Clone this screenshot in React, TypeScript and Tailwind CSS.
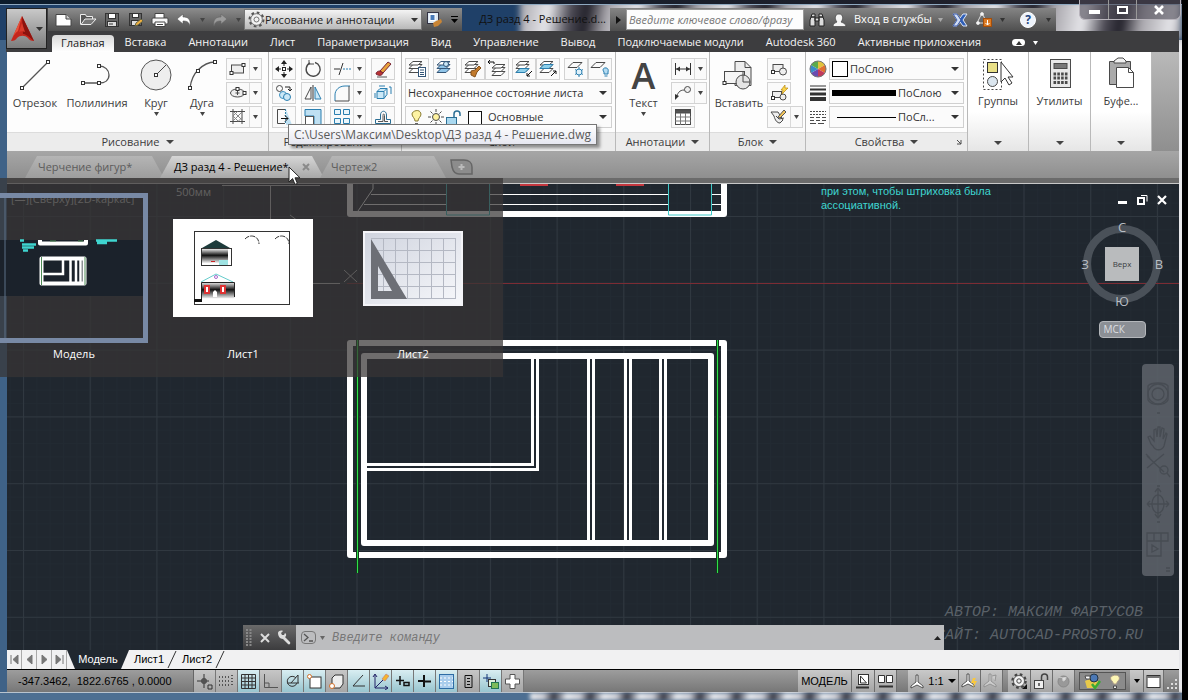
import React from 'react'
import clsx from 'clsx'

type IconProps = {
  w?: number
  h?: number
  stroke?: string
  className?: string
  children: React.ReactNode
}

const Icon = ({ w = 20, h = 20, stroke = '#4a4a4a', className, children }: IconProps) => (
  <svg
    width={w}
    height={h}
    viewBox={`0 0 ${w} ${h}`}
    fill="none"
    stroke={stroke}
    className={clsx('shrink-0', className)}
    aria-hidden="true"
  >
    {children}
  </svg>
)

const Caret = ({ className = 'text-[#333]', w = 7 }: { className?: string; w?: number }) => (
  <svg width={w} height={4} viewBox="0 0 8 4" preserveAspectRatio="none" className={clsx('shrink-0', className)} aria-hidden="true">
    <path d="M0 0h8L4 4z" fill="currentColor" />
  </svg>
)

// little square grip used at the ends of the drawing icons
const Node = ({ x, y }: { x: number; y: number }) => (
  <rect x={x - 1.5} y={y - 1.5} width={3} height={3} fill="#fff" stroke="#333" />
)

const Pointer = ({ className }: { className?: string }) => (
  <svg width={14} height={20} viewBox="0 0 14 20" className={className} aria-hidden="true">
    <path d="M1 1v15l3.6-3.4L7 18.4l2.4-1L7 11.8h5z" fill="#fff" stroke="#222" />
  </svg>
)

const quickIcons = [
  {
    label: 'Создать',
    art: (
      <Icon w={18} h={16} stroke="#444">
        <path d="M1 2.5h10l5 4.5v7H1z" fill="#fff" />
        <path d="M11 2.5V7h5" fill="#ccc" />
      </Icon>
    ),
  },
  {
    label: 'Открыть',
    art: (
      <Icon w={18} h={16} stroke="#eee">
        <path d="M1.5 12.5v-10h5l1 2h6v3" fill="#555" />
        <path d="M2 12.5 6 7h11l-5 5.5z" fill="#777" />
      </Icon>
    ),
  },
  {
    label: 'Сохранить',
    art: (
      <Icon w={16} h={16} stroke="#333">
        <rect x="1.5" y="1.5" width="13" height="13" fill="#666" />
        <rect x="4.5" y="1.5" width="7" height="5" fill="#fff" />
        <rect x="3.5" y="9.5" width="9" height="5" fill="#ddd" />
        <path d="M5 12h4" />
      </Icon>
    ),
  },
  {
    label: 'Сохранить как',
    art: (
      <Icon w={16} h={16} stroke="#333">
        <rect x="1.5" y="1.5" width="12" height="12" fill="#666" />
        <rect x="4.5" y="1.5" width="6" height="4" fill="#fff" />
        <rect x="3.5" y="8.5" width="8" height="5" fill="#ddd" />
        <path d="m7 14 1-3 5-4 2 2-5 4z" fill="#f0b040" stroke="#664" />
      </Icon>
    ),
  },
  {
    label: 'Печать',
    art: (
      <Icon w={18} h={16} stroke="#444">
        <path d="M4 6V1.500h9V6" fill="#fff" />
        <rect x="1" y="6" width="16" height="6" rx="1" fill="#f5f5f5" />
        <path d="M4 10h10v4.500H4z" fill="#fff" />
        <path d="M6 12.500h6" />
      </Icon>
    ),
  },
  {
    label: 'Отменить',
    art: (
      <Icon w={18} h={16}>
        <path d="M2 7 8 2v3c5 0 8 2 7 9-1-4-3-5-7-5v3z" fill="#fff" stroke="#555" strokeWidth=".6" />
      </Icon>
    ),
  },
]

const QuickAccess = () => (
  <div className="flex h-full shrink-0 items-center bg-gradient-to-b from-[#8d8d8d] to-[#4f4f4f] pl-1">
    {quickIcons.map((item) => (
      <button key={item.label} aria-label={item.label} className="flex w-6 justify-center">
        {item.art}
      </button>
    ))}
    <span className="flex w-3 justify-center">
      <Caret className="text-[#444]" w={5} />
    </span>
    <button aria-label="Повторить" className="flex w-6 justify-center">
      <Icon w={18} h={16}>
        <path d="m16 7-6-5v3C5 5 2 7 3 14c1-4 3-5 7-5v3z" fill="#9b9b9b" stroke="#666" strokeWidth=".6" />
      </Icon>
    </button>
    <span className="flex w-3 justify-center">
      <Caret className="text-[#444]" w={5} />
    </span>
    <div className="relative flex h-[21px] w-[178px] shrink-0 items-center border border-[#777] bg-gradient-to-b from-[#f4f4f4] to-[#b9b9b9] pl-[3px]">
      <Icon w={17} h={17} stroke="#555">
        <circle cx="8.500" cy="8.500" r="7" strokeWidth="2" strokeDasharray="2.700 2.800" />
        <circle cx="8.500" cy="8.500" r="5.800" fill="#f2f2f2" strokeWidth=".8" />
        <circle cx="8.500" cy="8.500" r="2.500" strokeWidth=".8" />
      </Icon>
      <select aria-label="Рабочее пространство" className="w-full appearance-none bg-transparent text-[11px] leading-4 text-[#1d1d1d] outline-none">
        <option>Рисование и аннотации</option>
      </select>
      <Caret className="pointer-events-none absolute right-[3px] text-[#333]" />
    </div>
    <button aria-label="Поиск объектов" className="flex w-6 justify-center">
      <Icon w={17} h={17} stroke="#334">
        <rect x="1.500" y="1.500" width="11" height="11" fill="#dce8f4" />
        <rect x="4" y="3.500" width="5" height="6" fill="#4679b8" stroke="#fff" />
        <path d="m7 12 3-2 5-2 1 3-4 4-4 1z" fill="#c98535" stroke="none" />
      </Icon>
    </button>
    <button aria-label="Настроить" className="flex w-4 flex-col items-center gap-[2px]">
      <span className="h-px w-[7px] bg-black" />
      <Caret className="text-black" />
    </button>
  </div>
)

const InfoCenter = () => (
  <div className="flex h-full shrink-0 items-center bg-gradient-to-b from-[#858585] to-[#4f4f4f] text-white">
    <button aria-label="Развернуть" className="flex w-4 justify-center">
      <Icon w={6} h={8}>
        <path d="m1 0 5 4-5 4z" fill="#111" stroke="none" />
      </Icon>
    </button>
    <input
      aria-label="Поиск"
      placeholder="Введите ключевое слово/фразу"
      className="h-[21px] w-[178px] border border-[#999] bg-[#fdfdfd] px-[2px] text-[11px] italic text-[#666] outline-none placeholder:text-[#777]"
    />
    <button aria-label="Найти" className="flex w-[26px] justify-center">
      <Icon w={16} h={16} stroke="#222">
        <path d="M2 5h4v9H1V8zM10 5h4l1 3v6h-5zM3 2h3v3H2zM10 2h3l1 3h-4zM6 6h4v3H6z" fill="#ddd" />
      </Icon>
    </button>
    <button className="flex items-center gap-[6px]">
      <Icon w={18} h={16} stroke="#444">
        <path d="M3 14.500c0-3 3-4 4-4.500-2-2-3-8 2-8s4 6 2 8c1 .5 5 1.500 5 4.500z" fill="#f5f5f5" strokeWidth=".7" />
      </Icon>
      <span className="whitespace-nowrap text-[11px]">Вход в службы</span>
    </button>
    <span className="flex w-4 justify-center">
      <Caret className="text-[#aaa]" w={5} />
    </span>
    <button aria-label="Exchange" className="flex w-6 justify-center">
      <Icon w={16} h={16}>
        <path d="M1 2h4l3 4 3-4h4l-4 6 4 6h-4l-3-4-3 4H1l4-6z" fill="#2f5fb8" stroke="#dfe8f8" />
        <path d="M1 2h4l4 6-4 6H1l4-6z" fill="#cfdcf3" stroke="#3957a5" />
      </Icon>
    </button>
    <button aria-label="Автономная справка" className="flex w-6 justify-center">
      <Icon w={18} h={17} stroke="#ddd">
        <path d="M7 2 2 12h10M7 2l4 8" />
        <circle cx="7" cy="3" r="1.500" fill="#fff" />
        <circle cx="3" cy="12" r="1.500" fill="#fff" />
        <rect x="8.500" y="7.500" width="8" height="8" fill="#dc7a22" stroke="#a34e0c" />
        <path d="M12.500 9v5m-2-2 2 2 2-2" stroke="#fff" />
      </Icon>
    </button>
    <span className="flex w-3 justify-center">
      <Caret className="text-[#333]" w={5} />
    </span>
    <button aria-label="Справка" className="ml-2 flex w-6 justify-center">
      <span className="flex size-4 items-center justify-center rounded-full border border-white bg-[#eef3fb] text-[12px] font-bold text-[#24457f]">?</span>
    </button>
    <span className="flex w-4 justify-center">
      <Caret className="text-[#333]" w={5} />
    </span>
  </div>
)

const WindowButtons = () => (
  <div className="absolute right-[1px] top-0 flex h-5 overflow-hidden rounded-b-md border border-t-0 border-[#b8b4bc] bg-[#4c4a55]/60">
    <button aria-label="Свернуть" className="flex w-[29px] items-center justify-center border-r border-[#999]">
      <span className="mt-1 h-[4px] w-[11px] bg-white" />
    </button>
    <button aria-label="Развернуть окно" className="flex w-[28px] items-center justify-center border-r border-[#999]">
      <span className="h-[8px] w-[11px] border-2 border-white" />
    </button>
    <button aria-label="Закрыть окно" className="flex w-[43px] items-center justify-center">
      <Icon w={12} h={10}>
        <path d="m2 1 8 8m0-8L2 9" stroke="#fff" strokeWidth="2.600" />
      </Icon>
    </button>
  </div>
)

const ribbonTabs = [
  'Вставка',
  'Аннотации',
  'Лист',
  'Параметризация',
  'Вид',
  'Управление',
  'Вывод',
  'Подключаемые модули',
  'Autodesk 360',
  'Активные приложения',
]

const RibbonTabs = () => (
  <nav className="flex h-[21px] items-end whitespace-nowrap bg-[#3d3d3f] pl-1 text-[11px] text-[#f4f4f4]">
    <a href="#home" className="flex h-[17px] items-center rounded-t-sm bg-gradient-to-b from-[#d9d9d9] to-white px-[9px] text-[#222]">
      Главная
    </a>
    {ribbonTabs.map((tab) => (
      <a key={tab} href="#tab" className="flex h-[19px] items-center px-[11px]">
        {tab}
      </a>
    ))}
    <button aria-label="Свернуть ленту" className="ml-5 flex h-[19px] items-center gap-2">
      <span className="flex h-[7px] w-[13px] items-center justify-center rounded-sm bg-white">
        <Caret className="rotate-180 text-[#333]" w={6} />
      </span>
      <Caret className="text-white" w={5} />
    </button>
  </nav>
)

type PanelProps = {
  title: string
  className: string
  launcher?: boolean
  children: React.ReactNode
}

const Panel = ({ title, className, launcher, children }: PanelProps) => (
  <section className={clsx('flex shrink-0 flex-col border-r border-[#b9b9b9] bg-[#fdfdfd]', className)}>
    <div className="flex flex-1 px-[3px] pt-[6px]">{children}</div>
    <button className="relative flex h-[19px] items-center justify-center gap-[6px] border-t border-[#dcdcdc] bg-[#ececec] text-[11px] text-[#3c3c3c]">
      {title}
      <Caret className="text-[#444]" w={8} />
      {launcher && (
        <Icon w={6} h={6} className="absolute right-[5px]">
          <path d="m1 1 4 4M5 1v4H1" />
        </Icon>
      )}
    </button>
  </section>
)

const BigButton = ({ label, caret, className, children }: { label: string; caret?: boolean; className: string; children: React.ReactNode }) => (
  <button className={clsx('flex shrink-0 flex-col items-center', className)}>
    {children}
    <span className="whitespace-nowrap text-[11px] leading-[18px] text-[#3c3c3c]">{label}</span>
    {caret && <Caret className="text-[#444]" w={5} />}
  </button>
)

const Tool = ({ label, split, className, children }: { label: string; split?: boolean; className?: string; children: React.ReactNode }) => (
  <span className={clsx('flex h-[22px] border border-[#d3d3d3] bg-[#fafafa]', className)}>
    <button aria-label={label} className="flex w-[22px] items-center justify-center">
      {children}
    </button>
    {split && (
      <button aria-label={`${label}: варианты`} className="flex w-3 items-center justify-center border-l border-[#d9d9d9]">
        <Caret className="text-[#444]" w={5} />
      </button>
    )}
  </span>
)

const Column = ({ children, className }: { children: React.ReactNode; className?: string }) => (
  <div className={clsx('flex shrink-0 flex-col items-start gap-[2px]', className)}>{children}</div>
)

const DrawPanel = () => (
  <Panel title="Рисование" className="w-[262px]">
    <BigButton label="Отрезок" className="w-[50px]">
      <Icon w={36} h={36}>
        <path d="M5 30 31 4" stroke="#555" strokeWidth="1.300" />
        <Node x={5} y={30} />
        <Node x={31} y={4} />
      </Icon>
    </BigButton>
    <BigButton label="Полилиния" className="w-[74px]">
      <Icon w={36} h={36}>
        <path d="M4 25h16c6 0 10-3 10-8s-4-9-10-9" stroke="#555" strokeWidth="1.300" />
        <Node x={4} y={25} />
        <Node x={20} y={25} />
        <Node x={20} y={8} />
      </Icon>
    </BigButton>
    <BigButton label="Круг" caret className="w-11">
      <Icon w={36} h={36}>
        <circle cx="18" cy="17" r="15" stroke="#555" fill="#eee" />
        <path d="m18 17 10-10" />
        <Node x={18} y={17} />
      </Icon>
    </BigButton>
    <BigButton label="Дуга" caret className="w-12">
      <Icon w={36} h={36}>
        <path d="M6 30C7 22 9 17 14 12s11-8 17-8" stroke="#555" strokeWidth="1.300" />
        <Node x={6} y={30} />
        <Node x={14} y={13} />
        <Node x={31} y={4} />
      </Icon>
    </BigButton>
    <Column>
      <Tool label="Прямоугольник" split>
        <Icon w={20} h={16}>
          <rect x="3.500" y="4" width="12" height="8" fill="#eee" />
          <Node x={3.5} y={12} />
          <Node x={15.5} y={4} />
        </Icon>
      </Tool>
      <Tool label="Эллипс" split>
        <Icon w={20} h={16}>
          <ellipse cx="9.500" cy="8" rx="7" ry="4" fill="#eee" />
          <path d="M9.500 6v4m-2-2h4" />
          <Node x={9.5} y={4} />
          <Node x={16.5} y={8} />
        </Icon>
      </Tool>
      <Tool label="Штриховка" split>
        <Icon w={20} h={18}>
          <path d="M5 1v15M14 1v15M2 3.500h15M2 13.500h15" />
          <path d="m5 8 4.500-4.500M5 13l9-9M10 13.500l4-4M6 4l8 8M5 8l5 5" stroke="#888" />
        </Icon>
      </Tool>
    </Column>
  </Panel>
)

const ModifyPanel = () => (
  <Panel title="Редактирование" className="w-[133px]">
    <Column className="w-[29px]">
      <Tool label="Перенести">
        <Icon w={18} h={18} stroke="#222">
          <path d="M9 1v5m0 6v5M1 9h5m6 0h5" />
          <path d="M9 0l3 4H6zM9 18l3-4H6zM0 9l4 3V6zM18 9l-4 3V6z" fill="#222" stroke="none" />
          <rect x="7.500" y="7.500" width="3" height="3" />
        </Icon>
      </Tool>
      <Tool label="Копировать">
        <Icon w={18} h={18}>
          <circle cx="4.500" cy="4.500" r="3" />
          <circle cx="8" cy="11" r="3.500" fill="#cbe8f7" stroke="#3b8fc0" />
          <circle cx="12" cy="13" r="3.500" fill="#cbe8f7" stroke="#2b7fb0" />
          <path d="M10 3h5v3m-2-1 2 2 2-2" stroke="#222" />
        </Icon>
      </Tool>
      <Tool label="Растянуть">
        <Icon w={18} h={18}>
          <path d="M11 1 17 17H11z" fill="#bfe0f2" stroke="none" />
          <path d="M10 1.500H2.500v14H10" />
          <path d="M10.500 1v15" strokeDasharray="2 1" stroke="#3a87ad" />
          <path d="M6 10.500h7m-3-3 3 3-3 3" stroke="#111" />
        </Icon>
      </Tool>
    </Column>
    <Column className="w-[29px]">
      <Tool label="Повернуть">
        <Icon w={18} h={18}>
          <path d="M11 2.500a7 7 0 1 1-5 .5" strokeWidth="1.400" />
          <path d="M5 0v4h5" />
        </Icon>
      </Tool>
      <Tool label="Зеркало">
        <Icon w={18} h={18}>
          <path d="M7 3v12H1z" />
          <path d="M11 3v12h6z" fill="#cbe8f7" stroke="#2b7fb0" />
          <path d="M9 1v16" stroke="#333" />
        </Icon>
      </Tool>
      <Tool label="Масштаб">
        <Icon w={18} h={18} stroke="#2b7fb0">
          <path d="M1 1.500h16v15H10V8H1z" fill="#bfe0f2" />
          <rect x="1.500" y="8.500" width="8" height="8" fill="#fff" stroke="#555" />
        </Icon>
      </Tool>
    </Column>
    <Column className="w-[41px]">
      <Tool label="Обрезать" split>
        <Icon w={18} h={16}>
          <path d="M1 8h6M6 14 10 2" stroke="#333" />
          <path d="M10 8h8" stroke="#2b7fb0" strokeDasharray="2 1" />
        </Icon>
      </Tool>
      <Tool label="Сопряжение" split>
        <Icon w={18} h={18}>
          <path d="M2 17V11c0-5 4-9 10-9h5" stroke="#2b7fb0" />
          <path d="M2 17h14V2" />
        </Icon>
      </Tool>
      <Tool label="Массив" split>
        <Icon w={18} h={18} stroke="#2b7fb0">
          <path d="M1.500 1.500h6v5h-6zM10.500 1.500h6v5h-6zM1.500 10.500h6v5h-6zM10.500 10.500h6v5h-6z" fill="#eaf6fc" />
        </Icon>
      </Tool>
    </Column>
    <Column>
      <Tool label="Стереть">
        <Icon w={18} h={18} stroke="#723">
          <path d="m6 11 8-9 3 2-8 9z" fill="#e8a33c" />
          <path d="M2 14c0-2 2-3 4-3l3 2c-1 3-4 3-7 1z" fill="#b33" />
          <path d="M3 17h10" stroke="#555" />
        </Icon>
      </Tool>
      <Tool label="Расчленить">
        <Icon w={18} h={18} stroke="#2b7fb0">
          <path d="M3 7.500h7v7H3zM3 7.500l3-3h7l-3 3M13 4.500v6l-3 4" fill="#cbe8f7" />
          <path d="M1 9v5M15 3h2v7M5 2h6" />
        </Icon>
      </Tool>
      <Tool label="Подобие">
        <Icon w={18} h={18} stroke="#2b6f95">
          <path d="M1.500 15.500v-4h5V7c0-5 6-5 6 0v4.500h4v4z" />
          <path d="M4 13.500h5V7.500c0-2 1.500-2 1.500 0v6H14" stroke="#555" />
        </Icon>
      </Tool>
    </Column>
  </Panel>
)

// stacked sheets, shared by all layer tools
const Sheets = ({ tint = '#fff' }: { tint?: string }) => (
  <g>
    <path d="m2 12.500 4-4h9l-4 4z" fill={tint} />
    <path d="m2 8.500 4-4h9l-4 4z" fill={tint} />
    <path d="m2 5 4-3.500h9L11 5z" fill="#fff" />
  </g>
)

const SelectBox = ({ label, value, before, className }: { label: string; value: string; before?: React.ReactNode; className?: string }) => (
  <div className={clsx('relative flex h-[22px] min-w-0 items-center border border-[#d0d0d0] bg-[#fbfbfb] pl-[2px] pr-4', className)}>
    {before}
    <select aria-label={label} className="w-0 min-w-0 flex-1 appearance-none bg-transparent text-[11px] leading-5 text-[#333] outline-none">
      <option>{value}</option>
    </select>
    <Caret className="pointer-events-none absolute right-1 text-[#333]" w={8} />
  </div>
)

const LayersPanel = () => (
  <Panel title="Слои" className="w-[214px]">
    <div className="flex min-w-0 flex-1 flex-col gap-[2px]">
      <div className="flex justify-between">
        <Tool label="Свойства слоя">
          <Icon w={20} h={18}>
            <Sheets />
            <rect x="11.500" y="7.500" width="7" height="9" fill="#fff" stroke="#357" />
            <path d="M13 10h4M13 12.500h4M13 14.500h4" stroke="#357" />
          </Icon>
        </Tool>
        <Tool label="Переход слоев">
          <Icon w={20} h={18} stroke="#357">
            <Sheets tint="#8fc4e8" />
            <circle cx="11" cy="4" r="2.500" fill="#cbe8f7" />
          </Icon>
        </Tool>
        <span className="flex">
          <Tool label="Копировать свойства слоя">
            <Icon w={20} h={18}>
              <Sheets />
              <path d="m8 11 4-1 4-4 2 2-4 4-2 5-4-2z" fill="#c27a2c" stroke="#84521c" />
            </Icon>
          </Tool>
          <Tool label="Предыдущий слой">
            <Icon w={20} h={18}>
              <g transform="translate(3 3)">
                <Sheets />
              </g>
              <path d="M7 4V2H1m2-2L1 2l2 2" stroke="#111" />
            </Icon>
          </Tool>
        </span>
        <span className="flex">
          <Tool label="Изолировать слой">
            <Icon w={20} h={18}>
              <Sheets />
              <path d="m2 12.500 4-4h9l-4 4z" fill="#8fd0ea" stroke="#2b7fb0" />
              <path d="m18 11-5 5m0-3v3h3" stroke="#111" />
            </Icon>
          </Tool>
          <Tool label="Отключить изоляцию">
            <Icon w={20} h={18}>
              <Sheets />
              <path d="m2 8.500 4-4h9l-4 4z" fill="#8fd0ea" stroke="#2b7fb0" />
              <path d="m13 16 5-5m-3 0h3v3" stroke="#111" />
            </Icon>
          </Tool>
        </span>
        <span className="flex">
          <Tool label="Заморозить слой">
            <Icon w={20} h={18}>
              <path d="m2 7.500 5-5h9l-5 5z" />
              <path d="M13 7v10M9 9.500l8 5M17 9.500l-8 5" stroke="#2b7fb0" />
              <circle cx="13" cy="12" r="3" stroke="#2b7fb0" fill="#dff1fa" />
            </Icon>
          </Tool>
          <Tool label="Отключить слой">
            <Icon w={20} h={18}>
              <path d="m1 7.500 5-5h9l-5 5z" />
              <path d="M14 14v-2c-4-5 6-6 4 0v2z" fill="#b5dcf2" stroke="#2b7fb0" />
              <path d="M14.500 16h3" stroke="#2b7fb0" />
            </Icon>
          </Tool>
        </span>
      </div>
      <SelectBox label="Состояние слоев" value="Несохраненное состояние листа" />
      <SelectBox
        label="Слой"
        value="Основные"
        before={
          <Icon w={76} h={18} className="mr-1">
            <path d="M7 13c0-3-3-4-3-7s8-6 9 0c0 3-3 4-3 7z" fill="#fdf3a4" stroke="#887a30" />
            <path d="M7 15.500h3" stroke="#666" />
            <circle cx="28" cy="9" r="3.500" fill="#fff3a0" />
            <path d="M28 1v3m0 10v3M20 9h3m10 0h3M22.500 3.500l2 2m7 7 2 2m0-11-2 2m-7 7-2 2" />
            <rect x="38.500" y="9.500" width="10" height="7" fill="#a9d8f0" stroke="#2b6f95" />
            <path d="M46 9V6c0-4 6-4 6 0v2" stroke="#2b6f95" strokeWidth="1.500" />
            <rect x="60.500" y="3.500" width="13" height="13" fill="#fff" stroke="#111" />
          </Icon>
        }
      />
    </div>
  </Panel>
)

const AnnotationPanel = () => (
  <Panel title="Аннотации" className="w-[94px]">
    <BigButton label="Текст" caret className="w-[49px]">
      <span className="flex h-9 items-center text-[36px] font-semibold leading-8 text-[#444]">A</span>
    </BigButton>
    <Column className="ml-[3px]">
      <Tool label="Размер" split>
        <Icon w={20} h={16}>
          <path d="M2.500 2v12M17.500 2v12M3 8h14" stroke="#333" />
          <path d="m3 8 4-2.500v5zM17 8l-4-2.500v5z" fill="#333" stroke="none" />
        </Icon>
      </Tool>
      <Tool label="Выноска" split>
        <Icon w={20} h={16}>
          <circle cx="14.500" cy="4.500" r="3" fill="#eee" />
          <path d="M11.500 5C6 5 5 8 3 13" />
          <path d="m2 15 0-6 4 2z" fill="#333" stroke="none" />
        </Icon>
      </Tool>
      <Tool label="Таблица">
        <Icon w={18} h={18}>
          <rect x="1.500" y="1.500" width="15" height="15" fill="#fff" />
          <path d="M1.500 2h15v3h-15z" fill="#555" />
          <path d="M1 9h16M1 13h16M6.500 5v12M11.500 5v12" stroke="#777" />
        </Icon>
      </Tool>
    </Column>
  </Panel>
)

const BlockPanel = () => (
  <Panel title="Блок" className="w-24">
    <BigButton label="Вставить" className="w-[52px]">
      <Icon w={36} h={36}>
        <path d="M14 3.500h10l6 6v18H14z" fill="#eee" />
        <path d="M24 3.500v6h6" />
        <rect x="3.500" y="13.500" width="20" height="12" fill="#f5f5f5" />
        <circle cx="22" cy="24" r="7" fill="#e4e4e4" />
        <path d="M22 13v11h7" />
        <Node x={3.5} y={25} />
      </Icon>
    </BigButton>
    <Column className="ml-[2px]">
      <Tool label="Создать блок">
        <Icon w={18} h={16}>
          <rect x="3" y="3.500" width="10" height="7" fill="#eee" />
          <circle cx="13" cy="10.500" r="3.500" fill="#eee" />
          <Node x={3} y={11} />
        </Icon>
      </Tool>
      <Tool label="Редактировать блок">
        <Icon w={18} h={18}>
          <rect x="2.500" y="7.500" width="9" height="6" fill="#eee" />
          <circle cx="13" cy="13" r="3" fill="#eee" />
          <path d="m11 6 4-5v3h3l-6 6 1-4z" fill="#fbd54a" stroke="#b98a10" strokeWidth=".7" />
          <Node x={3} y={14} />
        </Icon>
      </Tool>
      <Tool label="Атрибуты" split>
        <Icon w={20} h={18}>
          <path d="M2 4h7l5 8-3 3c-3 0-5-3-6-7z" fill="#eee" />
          <path d="m9 9 6-7 2 2-6 6z" fill="#f5c65a" stroke="#555" />
          <path d="m7 8 3 3 5-1" />
        </Icon>
      </Tool>
    </Column>
  </Panel>
)

const PropertiesPanel = () => (
  <Panel title="Свойства" launcher className="w-[162px]">
    <div className="flex min-w-0 flex-1 flex-col gap-[2px]">
      <div className="flex items-center gap-[2px]">
        <Icon w={18} h={18}>
          <g stroke="none">
            <path d="M9 9V1a8 8 0 0 1 7 4z" fill="#e2c33b" />
            <path d="m9 9 7-4a8 8 0 0 1 0 8z" fill="#e07030" />
            <path d="m9 9 7 4a8 8 0 0 1-7 4z" fill="#c23a5c" />
            <path d="M9 9v8a8 8 0 0 1-7-4z" fill="#6a4bb0" />
            <path d="m9 9-7 4a8 8 0 0 1 0-8z" fill="#3a8bc8" />
            <path d="M9 9 2 5a8 8 0 0 1 7-4z" fill="#5bab4c" />
          </g>
          <circle cx="9" cy="9" r="8" stroke="#777" />
        </Icon>
        <SelectBox
          label="Цвет"
          value="ПоСлою"
          className="flex-1"
          before={<span className="mr-[2px] size-4 shrink-0 border border-black bg-white" />}
        />
      </div>
      <div className="flex items-center gap-[2px]">
        <Icon w={18} h={18} stroke="#333">
          <path d="M1 2h16" />
          <path d="M1 5.500h16" strokeWidth="2" />
          <path d="M1 10h16" strokeWidth="3" />
          <path d="M1 15h16" strokeWidth="4" />
        </Icon>
        <SelectBox
          label="Вес линий"
          value="ПоСлою"
          className="flex-1"
          before={<span className="mr-[2px] h-[6px] w-16 shrink-0 bg-black" />}
        />
      </div>
      <div className="flex items-center gap-[2px]">
        <Icon w={18} h={18}>
          <path d="M1 3.500h16M1 6.500h16" strokeDasharray="2 1" />
          <path d="M1 9.500h16M1 12.500h16" strokeDasharray="4 2" />
          <path d="M1 15.500h16" strokeDasharray="6 2" />
        </Icon>
        <SelectBox
          label="Тип линий"
          value="ПоСл..."
          className="flex-1"
          before={<span className="ml-[5px] mr-[2px] h-px w-[59px] shrink-0 bg-black" />}
        />
      </div>
    </div>
  </Panel>
)

const CollapsedPanel = ({ label, className, children }: { label: string; className: string; children: React.ReactNode }) => (
  <button
    className={clsx(
      'flex shrink-0 flex-col items-center border-r border-[#b9b9b9] bg-gradient-to-b from-white from-60% to-[#e6e6e6] pb-[6px] pt-1 text-[11px] text-[#3c3c3c]',
      className,
    )}
  >
    {children}
    <span className="leading-[18px]">{label}</span>
    <Caret className="mt-auto text-[#444]" w={8} />
  </button>
)

const Ribbon = () => (
  <div className="flex h-[99px] shrink-0 bg-gradient-to-b from-[#b9b9b9] to-[#8f8f8f]">
    <DrawPanel />
    <ModifyPanel />
    <LayersPanel />
    <AnnotationPanel />
    <BlockPanel />
    <PropertiesPanel />
    <CollapsedPanel label="Группы" className="w-[61px]">
      <Icon w={36} h={36}>
        <rect x="3.500" y="3.500" width="18" height="30" strokeDasharray="2 2" stroke="#444" />
        <rect x="7.500" y="6.500" width="10" height="10" fill="#e9e087" stroke="#333" />
        <circle cx="12.500" cy="25.500" r="5" fill="#dbe6ef" />
        <path d="M21 6v20l4-4 4 7 3-2-4-6h5z" fill="#fff" stroke="#333" />
      </Icon>
    </CollapsedPanel>
    <CollapsedPanel label="Утилиты" className="w-[62px]">
      <Icon w={36} h={36}>
        <rect x="8.500" y="3.500" width="20" height="28" fill="#e8e8e8" />
        <rect x="12" y="7.500" width="13" height="5" fill="#777" />
        <path d="M11.500 18h14M11.500 22h14M11.500 26.500h14" strokeWidth="3" strokeDasharray="2.600 1.200" />
      </Icon>
    </CollapsedPanel>
    <CollapsedPanel label="Буфе..." className="w-[61px]">
      <Icon w={36} h={36}>
        <path d="M6.500 5.500h21v23h-21z" fill="#aaa" />
        <path d="M11 7V5l4-3h5l3 3v2z" fill="#f0f0f0" />
        <path d="M13.500 11.500h12l5 5v15h-17z" fill="#fff" />
        <path d="M25.500 11.500v5h5" />
      </Icon>
    </CollapsedPanel>
  </div>
)

const tabShape = '[clip-path:polygon(12px_0,calc(100%-12px)_0,100%_100%,0_100%)]'

const FileTabs = () => (
  <div className="flex h-[33px] shrink-0 flex-col bg-gradient-to-b from-[#a6a6a6] to-[#8a8a8a]">
    <div className="flex h-[27px] items-end pl-[18px] text-[11px] text-[#5c5c5c]">
      <a href="#f1" className={clsx('flex h-[22px] w-[139px] items-center bg-gradient-to-b from-[#b5b5b5] to-[#9d9d9d] pl-[13px]', tabShape)}>
        Черчение фигур*
      </a>
      <a
        href="#f2"
        className={clsx('-ml-1 flex h-[22px] w-[164px] items-center justify-between bg-gradient-to-b from-[#d6d6d6] to-[#a8a8a8] px-[14px] text-black', tabShape)}
      >
        <span className="whitespace-nowrap">ДЗ разд 4 - Решение*</span>
        <Icon w={8} h={8}>
          <path d="m1 1 6 6m0-6L1 7" stroke="#8a8a8a" strokeWidth="2" />
        </Icon>
      </a>
      <a href="#f3" className={clsx('-ml-1 flex h-[22px] w-[126px] items-center bg-gradient-to-b from-[#b5b5b5] to-[#9d9d9d] pl-[11px]', tabShape)}>
        Чертеж2
      </a>
      <button aria-label="Новый чертеж" className="mb-[3px] ml-1">
        <Icon w={24} h={16} stroke="#666">
          <path d="M1 1h13c5 0 8 3 8 7v7H9c-4 0-6-3-7-7z" fill="#8c8c8c" strokeWidth="1.500" />
          <path d="M11.500 5v6m-3-3h6" stroke="#bbb" strokeWidth="2" />
        </Icon>
      </button>
    </div>
    <div className="h-[5px] bg-[#6b6b6b]" />
    <div className="h-px bg-[#c8c8c8]" />
  </div>
)

// shapes use window coordinates, the group shifts them to the canvas origin
const Drawing = () => (
  <svg width="100%" height="100%" className="absolute inset-0" aria-hidden="true">
    <defs>
      <pattern id="minor" width="13.34" height="13.36" patternUnits="userSpaceOnUse" patternTransform="translate(16 32)">
        <path d="M.5 0v14M0 .5h14" stroke="#222a32" fill="none" />
      </pattern>
      <pattern id="major" width="66.7" height="66.8" patternUnits="userSpaceOnUse" patternTransform="translate(16 32)">
        <path d="M.5 0v67M0 .5h67" stroke="#303840" fill="none" />
      </pattern>
    </defs>
    <rect width="100%" height="100%" fill="#20272f" />
    <rect width="100%" height="100%" fill="url(#minor)" />
    <rect width="100%" height="100%" fill="url(#major)" />
    <path d="M340 99.500h900" stroke="#7c2c34" />
    <g transform="translate(-7 -184)" fill="none" stroke="#fff">
      <path d="M350 180v34h374v-34" strokeWidth="6" strokeLinejoin="round" />
      <path d="M371 194.500h75M489 194.500h179M712 194.500h10M364 204.500h82M489 204.500h179M712 204.500h10M358 211l15-22v-8" />
      <path d="M446.500 180v35h43v-35M668.500 180v35h43v-35" stroke="#3fc9c9" />
      <path d="M520 185h28M616 185h28" stroke="#c4373f" strokeWidth="2" />
      <path d="M222 185.500h98M270.500 185v35M313 283.500h27M344 270l13 12M357 270l-13 12M290 215l8 6" stroke="#c4c4c4" />

      <rect x="350" y="343" width="374" height="212" strokeWidth="6" strokeLinejoin="round" />
      <rect x="364" y="356" width="347" height="187" strokeWidth="6" strokeLinejoin="round" />
      <g strokeWidth="3">
        <path d="M532.500 358v106.500H366M537.500 358v111.500H366" />
        <path d="M588.500 358v184M593.500 358v184M625.500 358v184M630.500 358v184M660.500 358v184M665.500 358v184" />
      </g>
      <path d="M357.500 340v233M717.500 340v233" stroke="#123a1c" strokeWidth="3" />
      <path d="M357.500 340v233M717.500 340v233" stroke="#2fe04a" />
    </g>
  </svg>
)

const ViewCube = () => (
  <div className="absolute right-[16px] top-[34px] w-[82px] text-[#b9bec4]">
    <svg width={82} height={92} viewBox="0 0 82 92" aria-hidden="true">
      <circle cx="41" cy="46" r="35" fill="none" stroke="#4a5159" strokeWidth="8" />
      <rect x="24" y="29" width="34" height="34" fill="#b9bbbd" />
      <g fill="#b9bec4" fontSize="13" textAnchor="middle">
        <text x="41" y="14">С</text>
        <text x="41" y="88">Ю</text>
        <text x="4" y="51">З</text>
        <text x="78" y="51">В</text>
        <text x="41" y="49" fontSize="8" fill="#3a3d42">
          Верх
        </text>
      </g>
    </svg>
    <button className="mx-auto mt-[11px] flex h-[17px] w-[47px] items-center rounded border border-[#b4b7bb] bg-[#8b8f95] pl-1 text-[10px] text-[#dcdee0]">МСК</button>
  </div>
)

const NavBar = () => (
  <div className="absolute right-[5px] top-[180px] rounded bg-[#5b6068]/90">
    <svg width={32} height={212} viewBox="0 0 32 212" fill="none" stroke="#474c53" strokeWidth="1.300" aria-hidden="true">
      <path d="M6 22c3-4 17-4 20 0v14c-3 6-17 6-20 0z" />
      <circle cx="16" cy="30" r="6" />
      <circle cx="16" cy="30" r="10" />
      <path d="M15 49h3M15 122h3M15 158h3" />
      <path d="M9 80 6 73l2-1 4 5V66l2-1 1 8 1-10h2v10l2-9 2 1-1 10 3-6 1 1-3 12c-2 5-9 5-11 0z" />
      <path d="m5 92 17 16M22 90 5 104M4 90l4 4" />
      <circle cx="22" cy="106" r="4" />
      <path d="m25 109 3 4M16 124v30M16 124l-3 4m3-4 3 4M16 154l-3-4m3 4 3-4M5 140h22M5 140l3-3m-3 3 3 3M27 140l-3-3m3 3-3 3" />
      <ellipse cx="16" cy="140" rx="6" ry="9" />
      <path d="M5 169h21v8H5zM5 177v15h14v-15M12 169v8M19 169v8M10 181v7l6-3z" />
      <path d="M24 204h4m-4 3h4" />
    </svg>
  </div>
)

const CommandLine = () => (
  <div className="absolute bottom-0 left-[236px] right-[235px] flex h-[25px] items-center bg-[#bcbdbf]">
    <div className="flex h-full w-[53px] items-center justify-between bg-gradient-to-b from-[#6a6a6a] to-[#3c3c3e] pl-[3px] pr-[5px]">
      <svg width={6} height={18} viewBox="0 0 6 18" stroke="#888" strokeDasharray="2 1" aria-hidden="true">
        <path d="M1 0v18M4.500 0v18" strokeWidth="2" />
      </svg>
      <button aria-label="Закрыть">
        <Icon w={10} h={10} stroke="#ddd">
          <path d="m1 1 8 8m0-8L1 9" strokeWidth="2" />
        </Icon>
      </button>
      <button aria-label="Адаптация">
        <Icon w={14} h={15}>
          <path d="M1 3c0-2 3-3 5-2L4 3l1 2 2 0 1-2c2 1 1 4 0 4l5 5c1 2-1 3-2 2L6 9C3 9 1 6 1 3z" fill="#ddd" stroke="none" />
        </Icon>
      </button>
    </div>
    <span className="ml-[5px] flex h-[13px] w-[15px] items-center justify-center rounded-sm border border-[#777]">
      <Icon w={11} h={9} stroke="#555">
        <path d="m1 1 4 3.500L1 8M6 8h4" strokeWidth="1.300" />
      </Icon>
    </span>
    <Caret className="ml-1 text-[#666]" w={5} />
    <input
      aria-label="Командная строка"
      placeholder="Введите команду"
      className="ml-[7px] min-w-0 flex-1 bg-transparent font-['Liberation_Mono',monospace] text-[12px] italic outline-none placeholder:text-[#777]"
    />
    <button aria-label="История" className="mr-[3px]">
      <Caret className="rotate-180 text-[#222]" />
    </button>
  </div>
)

const Canvas = () => (
  <main className="relative min-h-0 flex-1 overflow-hidden">
    <Drawing />
    <p className="absolute left-[4px] top-[7px] whitespace-nowrap text-[11px] text-[#c4c4c4]">[—][Сверху][2D-каркас]</p>
    <p className="absolute left-[169px] top-0 text-[11px] leading-[15px] text-[#d0d0d0]">500мм</p>
    <p className="absolute left-[814px] top-0 whitespace-nowrap font-['Liberation_Sans',sans-serif] text-[11px] leading-[14px] text-[#3fd5d0]">
      при этом, чтобы штриховка была
      <br />
      ассоциативной.
    </p>
    <div className="absolute right-[12px] top-[11px] flex items-center gap-[9px]">
      <button aria-label="Свернуть чертеж">
        <Icon w={11} h={10}>
          <path d="M1 7.500h9" stroke="#fff" strokeWidth="3" />
        </Icon>
      </button>
      <button aria-label="Восстановить чертеж">
        <Icon w={11} h={10} stroke="#fff">
          <rect x="1" y="3" width="6" height="6" strokeWidth="2" />
          <path d="M4 .5h6v6" />
        </Icon>
      </button>
      <button aria-label="Закрыть чертеж">
        <Icon w={10} h={10} stroke="#fff">
          <path d="m1 1 8 8m0-8L1 9" strokeWidth="2.200" />
        </Icon>
      </button>
    </div>
    <ViewCube />
    <NavBar />
    <div className="absolute bottom-[3px] right-[36px] whitespace-nowrap text-right font-['Liberation_Mono',monospace] text-[15px] italic leading-[23px] text-[#5a6168]">
      <p>АВТОР: МАКСИМ ФАРТУСОВ</p>
      <p>САЙТ: AUTOCAD-PROSTO.RU</p>
    </div>
    <CommandLine />
  </main>
)

const pagerPaths = ['M3 2v9M10 2 5 6.500 10 11z', 'M9 2 4 6.500 9 11z', 'M4 2l5 4.500L4 11z', 'M3 2l5 4.500L3 11zM10 2v9']

const LayoutTabs = () => (
  <div className="flex h-[19px] shrink-0 items-stretch bg-[#f1f1f2] font-['Liberation_Sans',sans-serif] text-[11px] text-black">
    {pagerPaths.map((d) => (
      <button key={d} aria-label="Прокрутка листов" className="flex w-[15px] items-center justify-center border-r border-[#aaa]">
        <Icon w={13} h={13}>
          <path d={d} fill="#777" stroke="#777" strokeWidth="1" />
        </Icon>
      </button>
    ))}
    <a href="#model" className="flex w-[62px] items-center justify-center bg-[#20272f] text-white [clip-path:polygon(0_0,100%_0,calc(100%-8px)_100%,8px_100%)]">
      Модель
    </a>
    {['Лист1', 'Лист2'].map((name) => (
      <a key={name} href="#sheet" className="flex items-center">
        <span className="pl-[5px] pr-[3px]">{name}</span>
        <Icon w={10} h={19}>
          <path d="M1 18 9 1" stroke="#333" />
        </Icon>
      </a>
    ))}
  </div>
)

const toggles: { label: string; on?: boolean; d: React.ReactNode }[] = [
  { label: 'Подразумевание', d: <path d="M8 1v14M1 8h12M6 6h4v4H6zM12 12h4v4h-4z" /> },
  { label: 'Шаг', d: <path d="M1 4h10M1 8h10M1 12h10M14 2v11" strokeDasharray="1 2" strokeWidth="1.500" /> },
  { label: 'Сетка', on: true, d: <path d="M1.500 1.500h14v14h-14zM5 1v15M8.500 1v15M12 1v15M1 5h15M1 8.500h15M1 12h15" /> },
  { label: 'Орто', d: <path d="M2.500 1v13.500H16M2 10h5v4" stroke="#555" /> },
  { label: 'Отслеживание', on: true, d: <path d="M12 5a5 5 0 1 0 1 5M3 10h12M7 10l7-8v8" /> },
  {
    label: 'Привязка',
    on: true,
    d: (
      <>
        <rect x="4" y="4" width="11" height="11" fill="#fff" />
        <circle cx="3.500" cy="3.500" r="2" fill="#fff" stroke="#d0702a" />
      </>
    ),
  },
  {
    label: '3D привязка',
    d: (
      <>
        <path d="M4 5 7 2h8v9l-3 4H4z" fill="#eee" />
        <circle cx="4" cy="13" r="2.500" fill="#fff" stroke="#d0702a" />
      </>
    ),
  },
  { label: 'Объектное отслеживание', on: true, d: <path d="M13 2 3 13h12" /> },
  {
    label: 'ДПСК',
    on: true,
    d: (
      <>
        <path d="M3 2v13h13M3 15 11 7M1 4l2-3 2 3M13 13l3 2-3 2" stroke="#226" />
        <path d="m10 6 4-5 3 2-4 5z" fill="#f7b52c" stroke="#b77" strokeWidth=".6" />
      </>
    ),
  },
  { label: 'Динамический ввод', on: true, d: <path d="M6 3v9M2 7.500h8M10 9.500h5v3h-5z" stroke="#111" strokeWidth="1.500" /> },
  { label: 'Вес линий', on: true, d: <path d="M8 2v12M2 8h6M8 8.500h7" stroke="#111" strokeWidth="2" /> },
  {
    label: 'Прозрачность',
    on: true,
    d: (
      <>
        <rect x="1.500" y="1.500" width="14" height="14" fill="#a9cdec" stroke="#2d6ca5" />
        <path d="M2 5h13M2 8.500h13M2 12h13" stroke="#fff" strokeDasharray="2 2" />
      </>
    ),
  },
  { label: 'Свойства', d: <path d="M5 2.500h7v12H5zM7 5.500h3M7 8.500h3M7 11.500h3" stroke="#111" /> },
  {
    label: 'Циклический выбор',
    on: true,
    d: (
      <>
        <path d="M5 1v8M1 5h8" stroke="#137" />
        <rect x="6.500" y="6.500" width="7" height="7" fill="#dff0df" />
        <rect x="9.500" y="9.500" width="7" height="6" fill="#7dbb5a" stroke="#275" />
      </>
    ),
  },
  { label: 'Монитор', d: <path d="M6 1.500h5V6h4.500v5H11v4.500H6V11H1.500V6H6z" fill="#fff" stroke="#555" /> },
]

const StatusButton = ({ label, className, children }: { label: string; className?: string; children: React.ReactNode }) => (
  <button
    aria-label={label}
    className={clsx('flex h-full shrink-0 items-center justify-center border-r border-[#6e6e6e] bg-gradient-to-b from-[#c9c9c9] to-[#a5a5a5]', className ?? 'w-[22px]')}
  >
    {children}
  </button>
)

const StatusBar = () => (
  <footer className="flex h-[23px] shrink-0 items-stretch border-t border-black bg-gradient-to-b from-[#9d9d9d] to-[#777] font-['Liberation_Sans',sans-serif] text-[11px] text-black">
    <div className="flex w-[187px] items-center whitespace-pre border-r border-[#666] pl-[11px]">-347.3462,  1822.6765 , 0.0000</div>
    {toggles.map((t) => (
      <button
        key={t.label}
        aria-label={t.label}
        className={clsx(
          'flex w-[22px] shrink-0 items-center justify-center border-r border-[#777] bg-gradient-to-b',
          t.on ? 'from-[#d9eef2] to-[#98c5cf]' : 'from-[#c6c6c6] to-[#a6a6a6]',
        )}
      >
        <Icon w={17} h={17} stroke="#333">
          {t.d}
        </Icon>
      </button>
    ))}
    <div className="ml-auto flex items-stretch">
      <StatusButton label="Модель или лист" className="w-[54px]">
        МОДЕЛЬ
      </StatusButton>
      <StatusButton label="Быстрый просмотр листов" className="w-[23px]">
        <Icon w={16} h={16} stroke="#333">
          <rect x="3.500" y="1.500" width="10" height="10" fill="#fff" />
          <path d="M5.500 3v7h6z" />
          <path d="M1 14.500h13" strokeWidth="2" />
        </Icon>
      </StatusButton>
      <StatusButton label="Быстрый просмотр чертежей">
        <Icon w={17} h={16} stroke="#333">
          <path d="M1.500 2.500h6v7h-6zM9.500 2.500h6v7h-6z" fill="#fff" />
          <path d="M2 13.500h14" strokeWidth="2" />
        </Icon>
      </StatusButton>
      <StatusButton label="Масштаб аннотаций" className="ml-[11px] w-[51px] gap-1">
        <Icon w={14} h={15} stroke="#333">
          <path d="M6 1h2v7l5 4v2l-6-3-6 3v-2l5-4z" fill="#fff" strokeWidth=".8" />
        </Icon>
        <span>1:1</span>
        <Caret className="text-black" w={8} />
      </StatusButton>
      <StatusButton label="Видимость аннотаций">
        <Icon w={17} h={16} stroke="#333">
          <path d="M6 1h2v7l5 4v2l-6-3-6 3v-2l5-4z" fill="#fff" strokeWidth=".8" />
          <path d="m12 5-2 5h3l-1 5 4-7h-3l2-3z" fill="#fbc93c" stroke="none" />
        </Icon>
      </StatusButton>
      <StatusButton label="Автомасштаб">
        <Icon w={17} h={16} stroke="#888">
          <path d="M6 1h2v7l5 4v2l-6-3-6 3v-2l5-4zM9 3l4-1-1 6" fill="#ccc" strokeWidth=".8" />
        </Icon>
      </StatusButton>
      <StatusButton label="Рабочее пространство" className="ml-[5px] w-[23px]">
        <Icon w={17} h={17} stroke="#444">
          <circle cx="8" cy="8" r="6.500" strokeWidth="2.500" strokeDasharray="2.600 2.500" />
          <circle cx="8" cy="8" r="5.500" fill="#f2f2f2" strokeWidth=".8" />
          <circle cx="8" cy="8" r="2.200" />
          <path d="M16 11v5h-5z" fill="#111" stroke="none" />
        </Icon>
      </StatusButton>
      <StatusButton label="Блокировка панелей">
        <Icon w={17} h={17} stroke="#444">
          <rect x="1.500" y="7.500" width="9" height="8" fill="#eee" />
          <path d="M8.500 7V4c0-4 6-4 6 0v3M6 10v3" strokeWidth="1.500" />
        </Icon>
      </StatusButton>
      <StatusButton label="Аппаратное ускорение">
        <Icon w={15} h={15} stroke="#888">
          <circle cx="7.500" cy="7.500" r="5.500" fill="#999" />
          <path d="M3 4c2-2 4 0 4 3 2 0 3-2 3-4" fill="#ddd" stroke="#ccc" />
        </Icon>
      </StatusButton>
      <div className="my-[2px] ml-1 flex w-[47px] items-center justify-around border border-[#555] bg-[#8b8b8b]">
        <Icon w={18} h={17}>
          <path d="M1 8c5-3 10-2 14 1l-2 6H3z" fill="#e8c94a" stroke="none" />
          <circle cx="10" cy="5" r="4" fill="#4b78b5" stroke="#234" />
          <path d="M1 3h5v3H2z" fill="#fff" />
          <path d="m8 11 3 4 5-7" stroke="#3caa35" strokeWidth="2.500" />
        </Icon>
        <Icon w={12} h={17}>
          <path d="M4.500 11C4 8 1.500 7.500 1.500 5s8-5 9 0c0 2.500-2.500 3-3 6z" fill="#fdf7b5" stroke="#a98" />
          <path d="M4.500 13h3v2.500h-3z" fill="#eee" />
        </Icon>
      </div>
      <StatusButton label="Меню строки состояния" className="ml-1 w-[14px]">
        <Caret className="text-black" w={6} />
      </StatusButton>
      <StatusButton label="Очистить экран" className="w-[20px]">
        <Icon w={15} h={15} stroke="#333">
          <rect x="1" y="1.500" width="13" height="12" fill="#fff" />
          <path d="M1 3h13" strokeWidth="2" stroke="#777" />
        </Icon>
      </StatusButton>
      <Icon w={15} h={21} stroke="#ddd">
        <path d="M12 9v3M8 13v3M12 13v3M4 17v3M8 17v3M12 17v3" strokeWidth="2" strokeDasharray="2 1" />
      </Icon>
    </div>
  </footer>
)

const ModelThumb = () => (
  <svg width={148} height={150} viewBox="0 0 148 150" aria-hidden="true">
    <path d="M0 47h144v56H0z" fill="#1b222b" />
    <path d="M0 2.500h145.500v145H0" fill="none" stroke="#7889a5" strokeWidth="5" />
    <path d="M5 5v140" stroke="#5d7088" />
    <path d="M20 47.500h4M22 51.500h14M22 54.500h12M23 57.500h5M96 47.500h21M97 50h10" stroke="#3fd5d0" strokeWidth="2.500" />
    <path d="M40 47v3.500h46V47M41.500 65.500h43v25h-43z" fill="none" stroke="#fff" strokeWidth="4" strokeLinejoin="round" />
    <path d="M43 81h20V66M70.500 66v24M76 66v24M80.500 66v24" fill="none" stroke="#fff" strokeWidth="2.500" />
    <path d="M41.500 64v28M85 64v28M50 48h6M78 48h5" stroke="#4d8a55" fill="none" />
  </svg>
)

const SheetThumb = () => (
  <svg width={140} height={98} viewBox="0 0 140 98" aria-hidden="true">
    <defs>
      <linearGradient id="facade" x2="0" y2="1">
        <stop stopColor="#e8e8e8" />
        <stop offset=".45" stopColor="#111" />
        <stop offset="1" stopColor="#f4f4f4" />
      </linearGradient>
    </defs>
    <path d="M0 0h140v98H0z" fill="#fff" />
    <rect x="21.500" y="12.500" width="95" height="73" fill="none" stroke="#333" />
    <path d="m29 29 14-8 14 8z" fill="#1d3b3b" />
    <rect x="28.500" y="29.500" width="30" height="17" fill="#fff" stroke="#333" />
    <path d="M29 30h26v14H29z" fill="url(#facade)" />
    <path d="M38 42.500h4" stroke="#c22" />
    <path d="M46 41h9v5h-9z" fill="#9fe3e3" />
    <path d="m28 63 15-8 17 8" fill="none" stroke="#6cc" />
    <circle cx="43" cy="58" r="1.500" fill="none" stroke="#a6c" />
    <rect x="28.500" y="63.500" width="33" height="16" fill="url(#facade)" stroke="none" />
    <path d="M28.500 80V63.500h33V78" fill="none" stroke="#222" />
    <path d="M32 67h4v7h-4zM48 67h4v7h-4z" fill="#fff" stroke="#d33" strokeWidth="2" />
    <path d="M40 78v-5l2-2 2 2v5z" fill="#fff" />
    <path d="M21 80h8v3h-8z" fill="#111" />
    <path d="M72 20c4-5 14-4 14 5M102 20c4-5 14-4 14 5" fill="none" stroke="#333" strokeDasharray="5 1" />
  </svg>
)

const EmptySheetThumb = () => (
  <svg width={100} height={75} viewBox="0 0 100 75" aria-hidden="true">
    <defs>
      <linearGradient id="paper" x2="1" y2="1">
        <stop stopColor="#cfd3de" />
        <stop offset="1" stopColor="#f7f8fb" />
      </linearGradient>
    </defs>
    <rect x="1" y="1" width="98" height="73" fill="url(#paper)" stroke="#f4f4f8" strokeWidth="2" />
    <path d="M20.500 7v60M32.500 7v60M44.500 7v60M56.500 7v60M68.500 7v60M80.500 7v60M92.500 7v60M8 7.500h85M8 19.500h85M8 31.500h85M8 43.500h85M8 55.500h85M8 67.500h85" stroke="#b4b8c3" />
    <path d="M8 8v60h36zm7 27 14 25H15z" fill="#6d6f76" fillRule="evenodd" />
  </svg>
)

const LayoutPreview = () => (
  <div className="absolute left-0 top-[178px] flex h-[199px] w-[503px] items-start bg-[rgb(56_53_53/0.72)] pt-[15px] text-[11px] text-white">
    {[
      { name: 'Модель', cls: 'w-[148px]', art: <ModelThumb /> },
      { name: 'Лист1', cls: 'ml-[25px] w-[140px]', art: <SheetThumb /> },
      { name: 'Лист2', cls: 'ml-[30px] w-[140px]', art: <EmptySheetThumb /> },
    ].map((item) => (
      <figure key={item.name} className={clsx('flex flex-col items-center', item.cls)}>
        <div className="flex h-[150px] items-center">{item.art}</div>
        <figcaption className="leading-[22px]">{item.name}</figcaption>
      </figure>
    ))}
  </div>
)

const App = () => (
  <div className="h-screen bg-black pr-[6px] font-['Open_Sans','Noto_Sans',sans-serif]">
    <div className="relative flex h-full flex-col overflow-hidden bg-gradient-to-r from-[#3f6287] from-[6px] to-[#e9e9ec] pl-[6px] pr-[3px]">
      {/* glass title bar with the desktop showing through */}
      <div className="absolute inset-x-0 top-0 h-10 bg-[#1f4068]">
        <div className="ml-[520px] h-full bg-[repeating-linear-gradient(100deg,#a9a7ad_0px,#e6e6ea_30px,#4d4b55_52px,#22212a_68px,#a9a7ad_88px)] blur-[3px]" />
        <div className="absolute inset-x-0 top-0 h-[4px] bg-gradient-to-r from-[#0c1c2c] to-[#22202a]" />
        <div className="absolute inset-x-0 top-[4px] h-px bg-[#8fa9c0]" />
      </div>
      <div className="absolute inset-x-0 bottom-0 h-2 border-t border-[#b9c4cf] bg-[#4d6f92]">
        <div className="ml-[530px] h-full bg-[repeating-linear-gradient(100deg,#f2f2f4_0px,#d5d3d8_14px,#33313a_24px,#e6e6ea_36px)] blur-[2px]" />
      </div>
      <WindowButtons />

      <header className="relative mt-2 flex shrink-0">
        <div className="w-[42px] bg-[#3d3d3f]">
          <button aria-label="Меню приложения" className="flex h-[41px] w-[41px] items-center justify-center gap-px border border-[#222] bg-gradient-to-b from-[#c9c9c9] to-[#7d7d7d]">
            <svg width={25} height={28} viewBox="0 0 25 28" aria-hidden="true">
              <path d="M12 1 1 26c3 0 5-1 6-3 3-3 8-3 11 0 1 2 3 3 6 3z" fill="#c5261c" />
              <path d="M12 1 8 16c-3 2-5 5-7 10z" fill="#e8533b" />
              <path d="M12 1l1 18c3 0 5 2 11 7z" fill="#8c120d" />
              <path d="m12 8-3 9c2-1 4-1 6 0z" fill="#d93a2a" />
            </svg>
            <Caret className="text-[#333]" w={7} />
          </button>
        </div>
        <div className="flex min-w-0 flex-1 flex-col">
          <div className="flex h-[23px] items-center">
            <QuickAccess />
            <h1 className="min-w-0 flex-1 overflow-hidden whitespace-nowrap pr-1 text-right text-[11px] text-[#111]">ДЗ разд 4 - Решение.d...</h1>
            <InfoCenter />
            <div className="w-[123px] shrink-0" />
          </div>
          <RibbonTabs />
        </div>
      </header>

      <div className="relative flex min-h-0 flex-1 flex-col pl-px">
        <Ribbon />
        <FileTabs />
        <Canvas />
        <LayoutTabs />
        <StatusBar />
        <div className="h-2 shrink-0" />
      </div>

      <LayoutPreview />
      <div role="tooltip" className="absolute left-[288px] top-[124px] flex h-[21px] items-center whitespace-nowrap border border-[#777] bg-gradient-to-b from-white to-[#e6e7f0] px-[5px] text-[12px] text-[#5a5a5a] shadow-[3px_3px_3px_rgba(0,0,0,0.4)]">
        C:\Users\Максим\Desktop\ДЗ разд 4 - Решение.dwg
      </div>
      <Pointer className="absolute left-[288px] top-[166px]" />
    </div>
  </div>
)

export default App
